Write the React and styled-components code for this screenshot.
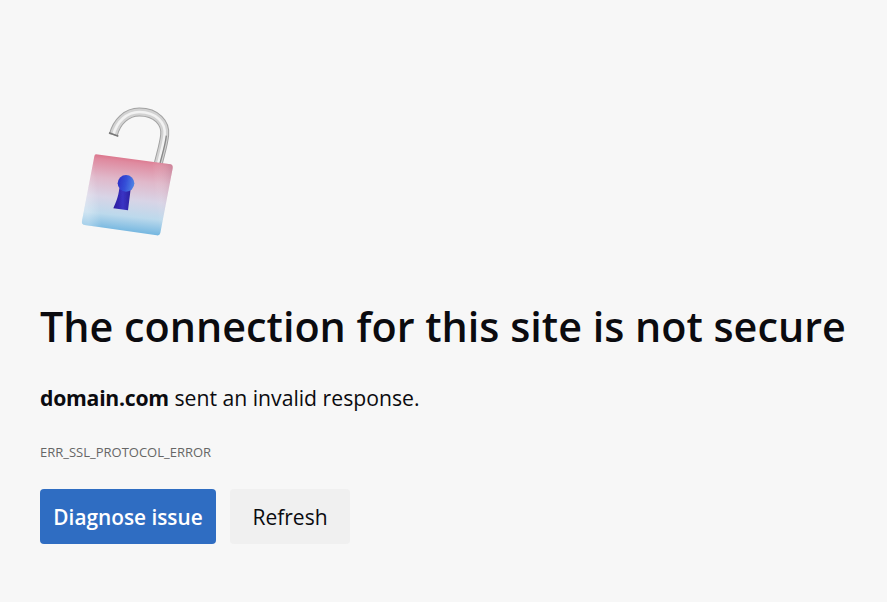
import styled, { createGlobalStyle } from "styled-components";

const Global = createGlobalStyle`
  html, body {
    margin: 0;
    padding: 0;
    background: #f7f7f7;
  }
`;

const Page = styled.main`
  width: 887px;
  height: 602px;
  box-sizing: border-box;
  padding: 95px 0 0 40px;
  overflow: hidden;
  font-family: "Open Sans", "Noto Sans", sans-serif;
  color: #0b0b0f;
`;

const LockBox = styled.div`
  width: 130px;
  height: 150px;
  margin-left: 20px;
`;

const Title = styled.h1`
  margin: 52px 0 0;
  font-size: 41.3px;
  line-height: 58px;
  font-weight: 600;
  white-space: nowrap;
`;

const Message = styled.p`
  margin: 28px 0 0;
  font-size: 21.2px;
  line-height: 30px;

  strong {
    font-weight: 700;
    letter-spacing: -0.25px;
  }
`;

const ErrorCode = styled.p`
  margin: 31px 0 0;
  font-size: 13px;
  line-height: 16px;
  color: #666;
`;

const Actions = styled.div`
  display: flex;
  gap: 14px;
  margin-top: 29px;
`;

const Button = styled.button`
  height: 55px;
  width: ${(p) => (p.$primary ? "176px" : "120px")};
  padding: 0;
  border: 0;
  border-radius: 4px;
  font-family: inherit;
  font-size: ${(p) => (p.$primary ? "20.8px" : "21px")};
  font-weight: ${(p) => (p.$primary ? 600 : 500)};
  color: ${(p) => (p.$primary ? "#fff" : "#0b0b0f")};
  background: ${(p) => (p.$primary ? "#2f6dc2" : "#f0f0f0")};
`;

const bodyPath =
  "M108 178 L332 208 Q339 210 338 220 L301 414 Q299 423 290 421 L74 390 Q64 388 66 378 L103 184 Q104 178 108 178 Z";
const shacklePath =
  "M160 120 C170 80 200 51 238 51 C290 51 318 85 314 120 C311 148 303 172 295 205";

function LockIcon() {
  return (
    <svg width="130" height="150" viewBox="0 0 390 450">
      <defs>
        <linearGradient id="body" x1="0.56" y1="0" x2="0.44" y2="1">
          <stop offset="0" stopColor="#d9647c" />
          <stop offset="0.1" stopColor="#df8a9f" />
          <stop offset="0.32" stopColor="#e0b8ca" />
          <stop offset="0.55" stopColor="#d8d4e6" />
          <stop offset="0.76" stopColor="#bcd9ec" />
          <stop offset="1" stopColor="#62aedd" />
        </linearGradient>
        <linearGradient id="edge" x1="0" y1="0.1" x2="1" y2="0">
          <stop offset="0" stopColor="#ffffff" stopOpacity="0.3" />
          <stop offset="0.14" stopColor="#ffffff" stopOpacity="0" />
          <stop offset="0.76" stopColor="#ffffff" stopOpacity="0" />
          <stop offset="1" stopColor="#a7768f" stopOpacity="0.4" />
        </linearGradient>
        <linearGradient id="stem" x1="0" y1="0" x2="1" y2="0">
          <stop offset="0" stopColor="#2a1a9c" />
          <stop offset="0.55" stopColor="#3a33c4" />
          <stop offset="1" stopColor="#2a209f" />
        </linearGradient>
        <linearGradient id="head" x1="0" y1="0.3" x2="1" y2="0.5">
          <stop offset="0" stopColor="#2c2fc6" />
          <stop offset="0.5" stopColor="#3550d8" />
          <stop offset="1" stopColor="#4f84e4" />
        </linearGradient>
        <filter id="soft" x="-10%" y="-10%" width="120%" height="120%">
          <feGaussianBlur stdDeviation="2.2" />
        </filter>
      </defs>
      <g filter="url(#soft)" fill="none">
        <path d={shacklePath} stroke="#a2a2a2" strokeWidth="27" />
        <path d={shacklePath} stroke="#d2d2d2" strokeWidth="21" />
        <path d={shacklePath} stroke="#f2f2f2" strokeWidth="8" />
        <path
          d="M319 122 C316 150 308 174 300 205"
          stroke="#8a8a8a"
          strokeWidth="4"
        />
        <path d="M147 113 L175 124" stroke="#777" strokeWidth="5" />
      </g>
      <g filter="url(#soft)">
        <path d={bodyPath} fill="url(#body)" />
        <path d={bodyPath} fill="url(#edge)" />
        <path
          d="M178 280 L212 282 L204 346 L160 340 C168 322 175 306 178 280 Z"
          fill="url(#stem)"
        />
        <circle cx="198" cy="265" r="25" fill="url(#head)" />
      </g>
    </svg>
  );
}

export default function App() {
  return (
    <Page>
      <Global />
      <LockBox>
        <LockIcon />
      </LockBox>
      <Title>The connection for this site is not secure</Title>
      <Message>
        <strong>domain.com</strong> sent an invalid response.
      </Message>
      <ErrorCode>ERR_SSL_PROTOCOL_ERROR</ErrorCode>
      <Actions>
        <Button $primary>Diagnose issue</Button>
        <Button>Refresh</Button>
      </Actions>
    </Page>
  );
}
